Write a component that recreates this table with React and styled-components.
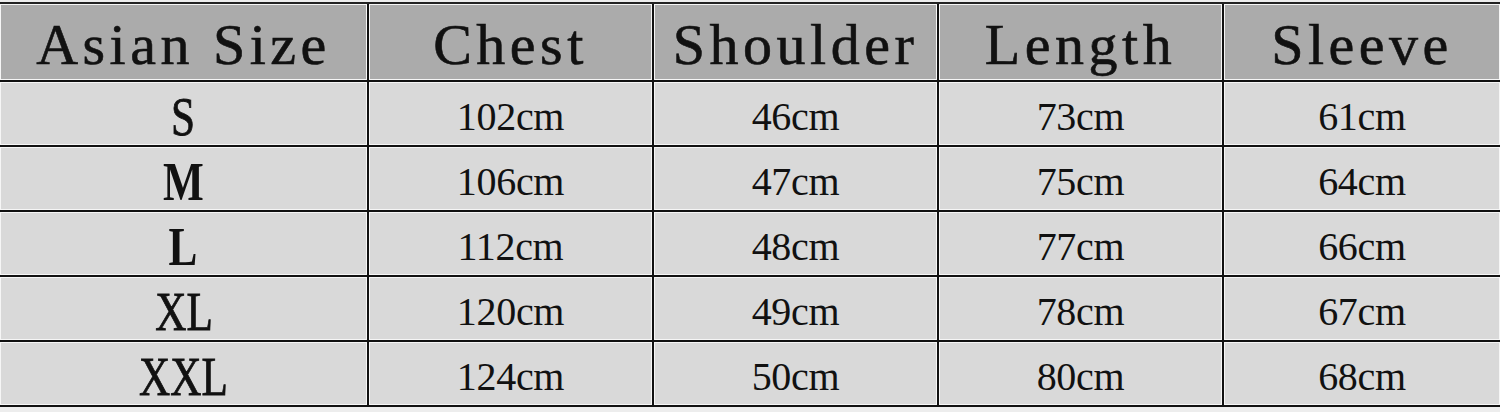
import React from "react";
import styled, { createGlobalStyle } from "styled-components";

const GlobalStyle = createGlobalStyle`
  html, body {
    margin: 0;
    padding: 0;
    background: #ededed;
    overflow: hidden;
  }
`;

const columns = ["Asian Size", "Chest", "Shoulder", "Length", "Sleeve"];

const rows = [
  { size: "S", bold: false, values: ["102cm", "46cm", "73cm", "61cm"] },
  { size: "M", bold: true, values: ["106cm", "47cm", "75cm", "64cm"] },
  { size: "L", bold: true, values: ["112cm", "48cm", "77cm", "66cm"] },
  { size: "XL", bold: false, values: ["120cm", "49cm", "78cm", "67cm"] },
  { size: "XXL", bold: false, values: ["124cm", "50cm", "80cm", "68cm"] },
];

const Page = styled.div`
  padding-top: 2px;
  width: 1500px;
  height: 412px;
  box-sizing: border-box;
`;

const Table = styled.div`
  display: grid;
  grid-template-columns: 367px 283px 283px 283px 1fr;
  grid-template-rows: 76px repeat(5, 63px);
  gap: 2px;
  background: #111;
  border-top: 2px solid #222;
  border-bottom: 2px solid #111;
`;

const Cell = styled.div`
  display: flex;
  align-items: center;
  justify-content: center;
  box-sizing: border-box;
  border: 1px solid #f6f6f6;
  background: ${(p) => (p.$head ? "#ababab" : "#d9d9d9")};
  color: #111;
  font-family: "Liberation Serif", "Times New Roman", serif;
  white-space: nowrap;
`;

const HeadText = styled.span`
  font-size: 58px;
  letter-spacing: 4.5px;
  padding-top: 6px;
  line-height: 1;
  -webkit-text-stroke: 0.6px #111;
`;

const SizeText = styled.span`
  display: inline-block;
  font-size: 54px;
  font-weight: ${(p) => (p.$bold ? 700 : 400)};
  transform: scaleX(0.8);
  padding-top: 6px;
  line-height: 1;
  -webkit-text-stroke: ${(p) => (p.$bold ? "0" : "0.8px #111")};
`;

const ValueText = styled.span`
  font-size: 40px;
  letter-spacing: -0.3px;
  padding-top: 6px;
  line-height: 1;
`;

export default function App() {
  return (
    <>
      <GlobalStyle />
      <Page>
        <Table>
          {columns.map((c) => (
            <Cell $head key={c}>
              <HeadText>{c}</HeadText>
            </Cell>
          ))}
          {rows.map((r) => (
            <React.Fragment key={r.size}>
              <Cell>
                <SizeText $bold={r.bold}>{r.size}</SizeText>
              </Cell>
              {r.values.map((v, i) => (
                <Cell key={i}>
                  <ValueText>{v}</ValueText>
                </Cell>
              ))}
            </React.Fragment>
          ))}
        </Table>
      </Page>
    </>
  );
}
